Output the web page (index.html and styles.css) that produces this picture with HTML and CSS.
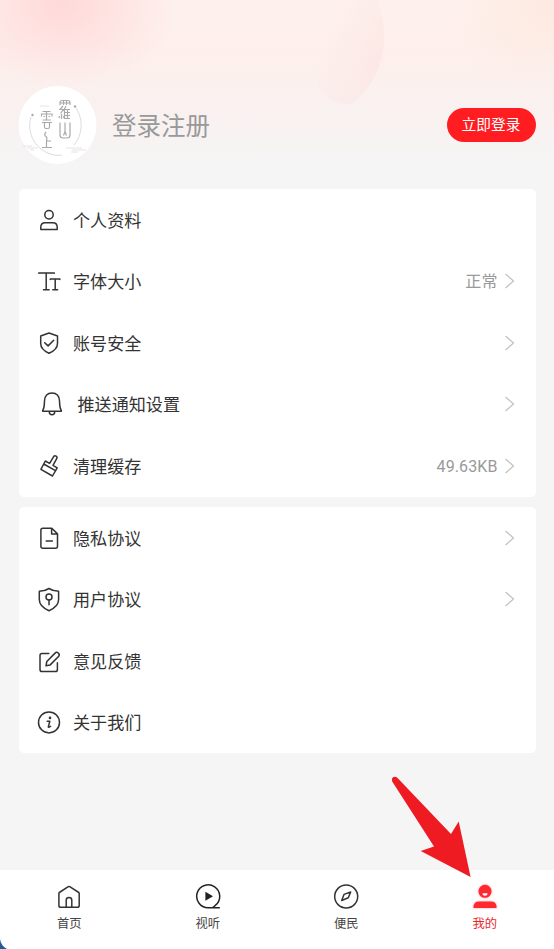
FILE: index.html
```
<!DOCTYPE html>
<html lang="zh-CN">
<head>
<meta charset="utf-8">
<title>我的</title>
<link rel="stylesheet" href="styles.css">
</head>
<body>
<div class="app">
  <header class="profile">
    <svg class="bubble" width="130" height="106" viewBox="0 0 130 106"><defs><linearGradient id="bub" gradientUnits="userSpaceOnUse" x1="30" y1="30" x2="108" y2="60"><stop offset="0" stop-color="#fbdcda" stop-opacity="0"/><stop offset="1" stop-color="#fbdcda" stop-opacity=".5"/></linearGradient></defs><path d="M20 0H80Q86 18 86 36C86 65 74 90 52 104Q40 106 20 90Z" fill="url(#bub)"/></svg>
    <svg class="avatar" width="79" height="79" viewBox="0 0 79 79" fill="none" stroke="#aaa" stroke-width="1">
      <circle cx="39.5" cy="39" r="39" fill="#fff" stroke="none"/>
      <path d="M13 31C8 48 18 65 36 69Q40 70 44 69M58 22C66 34 64 50 56 59" stroke="#ccc" stroke-width=".7"/>
      <circle cx="14.500" cy="29" r="1.2" fill="#aaa" stroke="none"/><circle cx="57" cy="20.500" r="1.200" fill="#aaa" stroke="none"/>
      <path d="M5 60h9M9 62h11M12 64h4M48 62h16M54 64h14M53 66h7M22 20h9" stroke="#ddd" stroke-width=".8"/>
      <g stroke-width="1.2">
        <path d="M42 19v-2q0-2.500 2-2.500h6q2 0 2 2.500v2M45.500 14.500v4.500M48.500 14.500v4.500M42 17h10M45 20l-3 3.500h3.500l-3 4M43.500 28v5M41.500 30l-.5 2M45.500 30l.5 2M48 20l-1.500 3v10M47 23.500h5M47 26.500h5M47 29.500h5M49.500 23v10M47 32.500h5"/>
        <path d="M42 36.500v12.500q0 3 3 3h4q3 0 3-3V36.500M47 36.500v9l-1.500 4M47 45.500l1.500 4"/>
        <path d="M24.500 25.500h8M23.500 30.500v-2.500h10.500v2.500M28.500 25.500v8M25.500 30.500h1.500M30.500 30.500h1.500M24.500 34h8.500M24 36.500h10M26.500 37v4q0 1.500 1.500 1.500h2q1.500 0 1.500-1.500v-4"/>
        <path d="M28 46q-2.500 3 0 4.500 1.500 1 .5 4v7M29 55h4M24 61.500h10"/>
      </g>
    </svg>
    <h1 class="profile-name">登录注册</h1>
    <button class="login">立即登录</button>
  </header>
  <main class="menus">
    <section class="card">
      <div class="row">
        <svg class="icon" viewBox="0 0 28 28"><circle cx="14" cy="8.800" r="4.200"/><path d="M5.800 23.400v-2.200Q5.800 16.800 10.200 16.800h7.600Q22.200 16.800 22.200 21.200v2.200Z"/></svg>
        <span class="label">个人资料</span>
      </div>
      <div class="row">
        <svg class="icon" viewBox="0 0 28 28"><path d="M3.800 6.300V5.900H19.300V6.300M11.200 5.900V22.700M8.500 22.700h5.600M15.300 12.500V12.100H24.800v.4M20.200 12.100V22.700M17.800 22.700h4.800"/></svg>
        <span class="label">字体大小</span><span class="value">正常</span>
        <svg class="chevron" viewBox="0 0 11 16"><path d="m1.500 1 8 7-8 7"/></svg>
      </div>
      <div class="row">
        <svg class="icon" viewBox="0 0 28 28"><path d="M14 4 22.500 7V14.500Q22.500 20.500 14 24.300 5.700 20.500 5.700 14.500V7ZM9.700 13.700l3.400 3.200 5.600-5.600"/></svg>
        <span class="label">账号安全</span>
        <svg class="chevron" viewBox="0 0 11 16"><path d="m1.500 1 8 7-8 7"/></svg>
      </div>
      <div class="row row-push">
        <svg class="icon" viewBox="0 0 28 28"><path d="M4.800 21.300Q4.400 21.300 4.800 20.300C6.600 17.500 6.300 14 6.500 10.800 6.800 5.800 9.900 3 14 3s7.200 2.800 7.500 7.800c.2 3.200-.1 6.700 1.700 9.500q.4 1 0 1ZM11.300 21.800Q11.300 24.800 14 24.800t2.700-3"/></svg>
        <span class="label">推送通知设置</span>
        <svg class="chevron" viewBox="0 0 11 16"><path d="m1.500 1 8 7-8 7"/></svg>
      </div>
      <div class="row">
        <svg class="icon" viewBox="0 0 28 28"><path d="M10.300 9 14.600 11.400 18.500 4.800Q19.500 3.200 21.100 4.100 22.600 5 21.700 6.700L18 13.400 22.200 15.800 17.500 24 5.900 17.300ZM8.700 12 20.500 18.700"/></svg>
        <span class="label">清理缓存</span><span class="value">49.63KB</span>
        <svg class="chevron" viewBox="0 0 11 16"><path d="m1.500 1 8 7-8 7"/></svg>
      </div>
    </section>
    <section class="card">
      <div class="row">
        <svg class="icon" viewBox="0 0 28 28"><path d="M16.800 4.200H7.800Q5.900 4.200 5.900 6.200V22.200Q5.900 24.200 7.900 24.200H20.500Q22.500 24.200 22.500 22.200V9.900ZM16.600 4.400V9.900H22.300M11.200 17h6.200"/></svg>
        <span class="label">隐私协议</span>
        <svg class="chevron" viewBox="0 0 11 16"><path d="m1.500 1 8 7-8 7"/></svg>
      </div>
      <div class="row">
        <svg class="icon" viewBox="0 0 28 28"><path d="M14 3.500Q18 6.100 23.600 6.300V14.500Q23.600 21.500 14 25.700 4.300 21.500 4.300 14.500V6.300Q10 6.100 14 3.500Z"/><circle cx="14" cy="12.100" r="3"/><path d="M14 15.100V19.800"/></svg>
        <span class="label">用户协议</span>
        <svg class="chevron" viewBox="0 0 11 16"><path d="m1.500 1 8 7-8 7"/></svg>
      </div>
      <div class="row">
        <svg class="icon" viewBox="0 0 28 28"><path d="M13.800 6.500H7Q5 6.500 5 8.500V22.400Q5 24.500 7 24.500H20.400Q22.400 24.500 22.400 22.400V15.800M11 18.800l.8-4.300L20.100 6.100Q21.700 4.500 23.500 6.200 25.100 7.900 23.500 9.500L15.200 17.900Z"/></svg>
        <span class="label">意见反馈</span>
      </div>
      <div class="row">
        <svg class="icon" viewBox="0 0 28 28"><circle cx="14" cy="14.400" r="10.500"/><circle cx="15" cy="9.900" r="1.300" fill="#333" stroke="none"/><path d="M12.200 13.200h2.600L13.300 18.900q0 .9 2.300-.5"/></svg>
        <span class="label">关于我们</span>
      </div>
    </section>
  </main>
  <nav class="tabs">
    <a class="tab"><svg class="tab-icon" viewBox="0 0 28 28"><path d="M3.900 10.300Q3.900 9.800 4.300 9.500L13.300 3.600Q14 3.200 14.700 3.600L23.800 9.500Q24.200 9.800 24.200 10.300V22.400Q24.200 24.300 22.300 24.300H5.800Q3.900 24.300 3.900 22.400ZM11.200 24V17.200Q11.200 14.500 14 14.500T16.800 17.200V24"/></svg>首页</a>
    <a class="tab"><svg class="tab-icon dark" viewBox="0 0 28 28"><path d="M25.300 24.800H14A11.500 11.500 0 1 1 21.500 22.200L18.800 24.600"/><path d="M11.400 8.800 19 13.300 11.400 17.800Z" fill="#222" stroke="none"/></svg>视听</a>
    <a class="tab"><svg class="tab-icon" viewBox="0 0 28 28"><circle cx="14.200" cy="13.500" r="11.500"/><path d="M18.700 9 16.300 14.800 9.700 17.500 12 11.400Z"/></svg>便民</a>
    <a class="tab active"><svg class="tab-icon mine" viewBox="0 0 28 28"><circle cx="14" cy="8.300" r="6.500"/><path d="M2.500 25v-2.200Q3.500 18.500 8.200 18.500h11.600Q24.700 18.500 25.500 22.800V25Z"/><path d="M11.500 10.200h5Q16.500 12.700 14 12.700T11.500 10.200Z" fill="#fff"/></svg>我的</a>
  </nav>
  <svg class="pointer" width="80" height="101" viewBox="0 0 80 101"><path d="M1.200 5.500Q0 1.500 3.500 .8Q5.500 .5 7.500 3L60 58 67.700 45.500 79.600 101 29.700 75 43 70.500Z" fill="#ef1b22"/></svg>
  <svg class="corner" width="7" height="12" viewBox="0 0 7 12"><path d="M0 2Q1 9 7 12H0Z" fill="#245b9c"/></svg>
</div>
</body>
</html>
```
FILE: styles.css
```
* { box-sizing: border-box; }
body { margin: 0; background: #f5f5f5; font-family: Roboto, "Noto Sans CJK SC", sans-serif; color: #333; }
.app { position: relative; display: flex; flex-direction: column; height: 949px; overflow: hidden; }
.profile {
  position: relative; display: flex; align-items: center; height: 189px; padding: 61px 18.5px 0;
  background:
    linear-gradient(to bottom, rgba(245,245,245,0) 25%, #f5f5f5 88%),
    radial-gradient(ellipse 115px 85px at 62px 5px, #ffd9d9, rgba(255,218,216,0)),
    radial-gradient(ellipse 110px 100px at 554px 0, #fdeae0, rgba(253,232,220,0)),
    linear-gradient(to bottom, #fef1ed, #fdeae8);
}
.bubble { position: absolute; left: 298px; top: 0; }
.avatar { position: relative; flex: none; margin-left: -.5px; }
.profile-name { margin: 0 0 0 15px; padding-top: 3px; font-size: 24.500px; font-weight: 400; line-height: 36px; color: #999; }
.login { margin-left: auto; width: 89px; height: 34px; padding: 0; border: 0; border-radius: 17px; background: #ff1d21; color: #fff; font: inherit; font-size: 14.700px; line-height: 34px; }
.menus { flex: 1; padding: 0 18.5px; }
.card { margin-bottom: 10.500px; border-radius: 5px; background: #fff; }
.row { display: flex; align-items: center; height: 61.500px; padding: 0 21px 0 16.500px; }
.row-push { padding-left: 19px; }
.icon { flex: none; width: 28px; height: 28px; margin-right: 10px; }
.row-push .icon { margin-right: 12px; }
.icon, .tab-icon { fill: none; stroke: #333; stroke-width: 1.500; stroke-linejoin: round; stroke-linecap: round; }
.label { flex: 1; padding-top: 1.500px; font-size: 17.100px; line-height: 26px; }
.value { margin-right: 6px; padding-top: 1.500px; font-size: 16px; line-height: 24px; letter-spacing: .1px; color: #999; }
.chevron { flex: none; width: 11px; height: 16px; fill: none; stroke: #c4c4c4; stroke-width: 1.300; }
.tabs { display: flex; height: 79px; background: #fff; }
.tab { flex: 1; display: flex; flex-direction: column; align-items: center; padding-top: 13px; font-size: 12.300px; line-height: 18px; color: #444; }
.tab-icon { width: 28px; height: 28px; margin-bottom: 4px; }
.tab-icon.dark { stroke: #222; }
.tab-icon.mine { fill: #ff2a30; stroke: none; filter: drop-shadow(0 0 1px #ff9a9c); }
.tab.active { color: #e8262c; }
.pointer { position: absolute; left: 391px; top: 776px; }
.corner { position: absolute; left: 0; bottom: 0; }
```
